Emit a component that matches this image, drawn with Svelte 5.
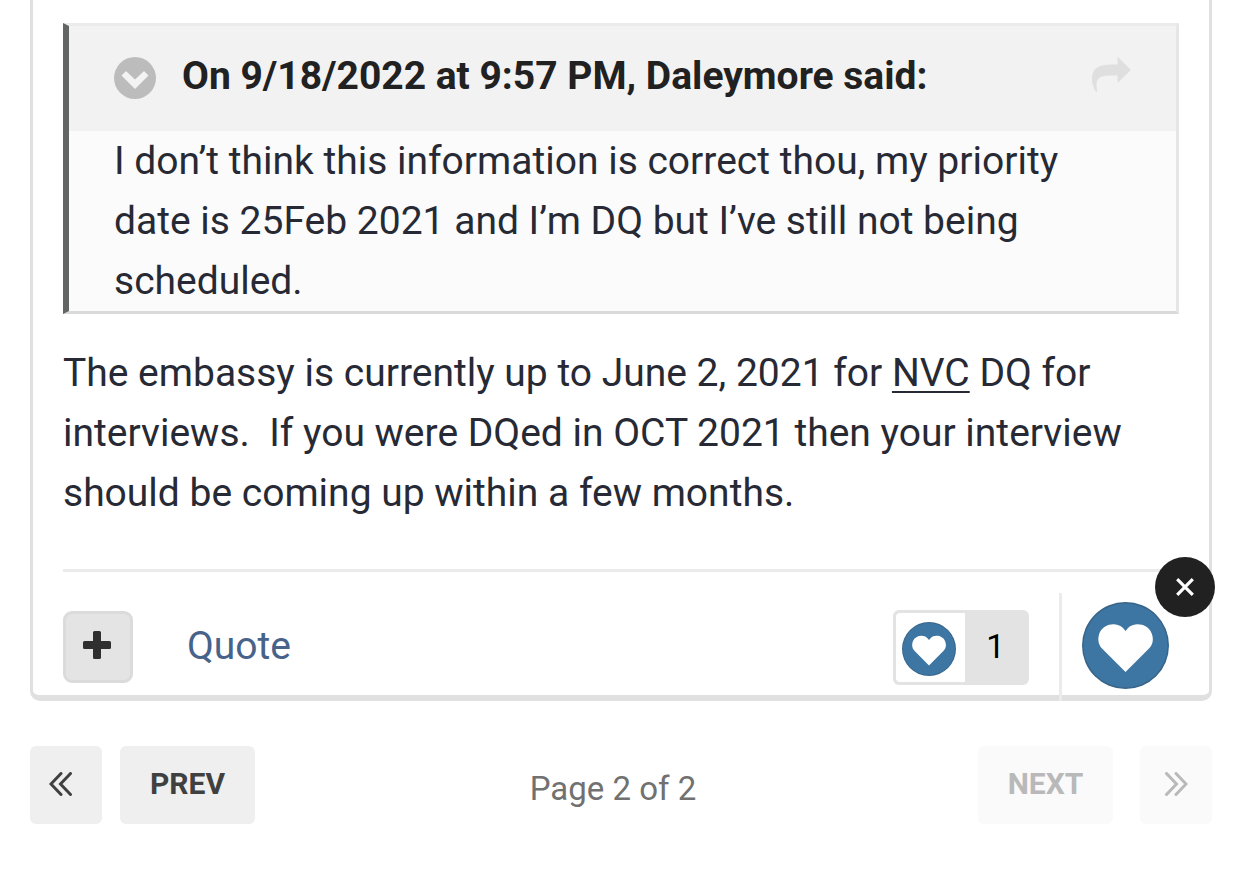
<script>
  let quoteOpen = $state(true);
  let menuOpen = $state(true);
</script>

{#snippet heart()}
  <svg viewBox="0 0 87 87" aria-hidden="true">
    <circle cx="43.5" cy="43.5" r="43.5" fill="#38648a" />
    <circle cx="43.5" cy="43.5" r="42" fill="#3d76a3" />
    <path
      d="M43.5 70 L20 46.500C16 42.500 15.500 36 17.500 31C21.500 22 34 19.500 41 26L43.500 29L46 26C53 19.500 66 22 69.500 31C72 37 71 42.500 67 46.500Z"
      fill="#fff"
    />
  </svg>
{/snippet}

<main>
  <article class="post">
    <blockquote>
      <header>
        <button class="toggle" aria-label="Toggle quote" onclick={() => (quoteOpen = !quoteOpen)}>
          <svg viewBox="0 0 42 42" aria-hidden="true">
            <circle cx="21" cy="21" r="21" fill="#bcbcbc" />
            <path d="M8 18 L11.500 14.500Q12 14 12.500 14.500L21 22.500L29.500 14.500Q30 14 30.500 14.500L34 18Q34.500 18.500 34 19L21.500 31.500Q21 32 20.500 31.500L8 19Q7.500 18.500 8 18Z" fill="#f3f3f3" />
          </svg>
        </button>
        <cite>On 9/18/2022 at 9:57 PM, Daleymore said:</cite>
        <a class="share" href="#original" aria-label="Go to original post">
          <svg viewBox="0 0 40 36" aria-hidden="true">
            <path d="M26.500 0.500Q26.500 -0.500 27.500 0.500L39 12Q40 13 39 14L27.500 25Q26.500 26 26.500 24.500V18.500H18C8 18.500 5.500 22 5.500 28C5.500 30 6 32 6 34.500Q5.500 35.500 4.500 34C2 30 1 26 1 22C1 11 8 7.500 20 7.500H26.500Z" fill="#dfdfdf" />
          </svg>
        </a>
      </header>
      {#if quoteOpen}
        <p>I don’t think this information is correct thou, my priority date is 25Feb 2021 and I’m DQ but I’ve still not being scheduled.</p>
      {/if}
    </blockquote>

    <p class="reply">The embassy is currently up to June 2, 2021 for <a href="#nvc">NVC</a> DQ for interviews.&nbsp; If you were DQed in OCT 2021 then your interview should be coming up within a few months.</p>

    <footer>
      <div class="actions">
        <button class="multi" aria-label="Multiquote">
          <svg viewBox="0 0 28 28" aria-hidden="true">
            <path d="M11.500 0H16.500Q18 0 18 1.500V10H26.500Q28 10 28 11.500V16.500Q28 18 26.500 18H18V26.500Q18 28 16.500 28H11.500Q10 28 10 26.500V18H1.500Q0 18 0 16.500V11.500Q0 10 1.500 10H10V1.500Q10 0 11.500 0Z" fill="#2f2f2f" />
          </svg>
        </button>
        <a class="quote-link" href="#quote">Quote</a>
      </div>
      <div class="reactions">
        <button class="count" aria-label="1 reaction">
          <span class="icon">{@render heart()}</span>
          <span class="number">1</span>
        </button>
        <div class="react">
          <button class="love" aria-label="Love">{@render heart()}</button>
          {#if menuOpen}
            <button class="close" aria-label="Remove reaction" onclick={() => (menuOpen = false)}>
              <svg viewBox="0 0 18 18" aria-hidden="true">
                <path d="M1.200 1.200L16.800 16.800M16.800 1.200L1.200 16.800" stroke="#fff" stroke-width="3.200" />
              </svg>
            </button>
          {/if}
        </div>
      </div>
    </footer>
  </article>

  <nav aria-label="Pagination">
    <div class="group">
      <button class="step" aria-label="First page">
        <svg viewBox="0 0 24 24" aria-hidden="true">
          <path d="M12 1.500L2 12L12 22.500M21.500 1.500L11.500 12L21.500 22.500" />
        </svg>
      </button>
      <button class="word">PREV</button>
    </div>
    <span class="page">Page 2 of 2</span>
    <div class="group end">
      <button class="word" disabled>NEXT</button>
      <button class="step" aria-label="Last page" disabled>
        <svg viewBox="0 0 24 24" aria-hidden="true">
          <path d="M2.500 1.500L12.500 12L2.500 22.500M12 1.500L22 12L12 22.500" />
        </svg>
      </button>
    </div>
  </nav>
</main>

<style>
  :global(body) {
    background: #fff;
  }
  main {
    padding: 0 30px 57px;
    font-family: Roboto, "Liberation Sans", sans-serif;
    font-size: 39px;
    line-height: 60px;
    color: #272a34;
  }
  button {
    margin: 0;
    padding: 0;
    border: 0;
    background: none;
    font: inherit;
    color: inherit;
    box-sizing: border-box;
    cursor: pointer;
  }
  svg {
    display: block;
    width: 100%;
  }
  p {
    margin: 0;
  }
  .post {
    padding: 23px 30px 0;
    border: solid #e0e0e0;
    border-width: 0 3px 6px;
    border-radius: 0 0 10px 10px;
  }
  blockquote {
    margin: 0;
    border: 3px solid #e6e6e6;
    border-top-color: #ebebeb;
    border-bottom-color: #dadada;
    border-left: 6px solid #636565;
    background: #fbfbfb;
  }
  blockquote header {
    display: flex;
    align-items: center;
    gap: 26px;
    height: 105px;
    padding: 0 45px 2px;
    box-sizing: border-box;
    background: #f2f2f2;
  }
  blockquote p {
    padding: 0 45px;
  }
  .toggle {
    flex: none;
    width: 42px;
  }
  cite {
    flex: 1;
    padding-bottom: 4px;
    font-style: normal;
    font-weight: 700;
    color: #212121;
  }
  .share {
    width: 40px;
    padding-bottom: 6px;
  }
  .reply {
    padding: 29px 0 46px;
  }
  .reply a {
    color: inherit;
    text-decoration: underline;
    text-decoration-thickness: 2px;
    text-underline-offset: 5px;
  }
  footer {
    display: flex;
    justify-content: space-between;
    border-top: 3px solid #ebebeb;
  }
  .actions,
  .reactions {
    display: flex;
    align-items: flex-start;
    height: 123px;
  }
  .actions {
    gap: 54px;
  }
  .reactions {
    gap: 30px;
  }
  .multi {
    display: grid;
    place-items: center;
    width: 70px;
    height: 72px;
    margin-top: 39px;
    padding: 0 2px 4px 0;
    border: 3px solid #dbdbdb;
    border-radius: 9px;
    background: #e4e4e4;
  }
  .multi svg {
    width: 28px;
  }
  .quote-link {
    margin-top: 44px;
    color: #47638a;
    text-decoration: none;
  }
  .count {
    display: flex;
    width: 136px;
    height: 75px;
    margin-top: 38px;
    border: 3px solid #e3e3e3;
    border-radius: 6px;
    background: #e3e3e3;
    overflow: hidden;
  }
  .icon {
    display: grid;
    place-items: center;
    width: 69px;
    height: 69px;
    padding: 2px 3px 0 0;
    box-sizing: border-box;
    background: #fff;
    border-radius: 4px 0 0 4px;
  }
  .icon svg {
    width: 54px;
  }
  .number {
    flex: 1;
    padding-top: 4px;
    color: #000;
    font-size: 33px;
  }
  .react {
    position: relative;
    height: 108px;
    margin-top: 21px;
    padding: 9px 10px 0 20px;
    box-sizing: border-box;
    border-left: 3px solid #ebebeb;
  }
  .love {
    display: block;
    width: 87px;
  }
  .close {
    position: absolute;
    top: -36px;
    right: -36px;
    display: grid;
    place-items: center;
    width: 60px;
    height: 60px;
    border-radius: 50%;
    background: #212121;
  }
  .close svg {
    width: 18px;
  }
  nav {
    display: grid;
    grid-template-columns: 1fr auto 1fr;
    align-items: center;
    margin-top: 45px;
  }
  .group {
    display: flex;
    gap: 18px;
  }
  .end {
    justify-content: flex-end;
    gap: 27px;
  }
  .step,
  .word {
    height: 78px;
    border-radius: 6px;
    background: #efefef;
    color: #404040;
  }
  .step {
    width: 72px;
    padding: 0 0 2px 19px;
  }
  .end .step {
    padding-left: 24px;
  }
  .step svg {
    width: 24px;
    fill: none;
    stroke: currentColor;
    stroke-width: 3px;
    stroke-linecap: round;
  }
  .word {
    width: 135px;
    padding-bottom: 3px;
    font-size: 30px;
    font-weight: 700;
  }
  button:disabled {
    background: #fafafa;
    color: #b9b9b9;
    cursor: default;
  }
  .page {
    padding: 8px 16px 0 0;
    font-size: 33px;
    color: #717171;
  }
</style>
